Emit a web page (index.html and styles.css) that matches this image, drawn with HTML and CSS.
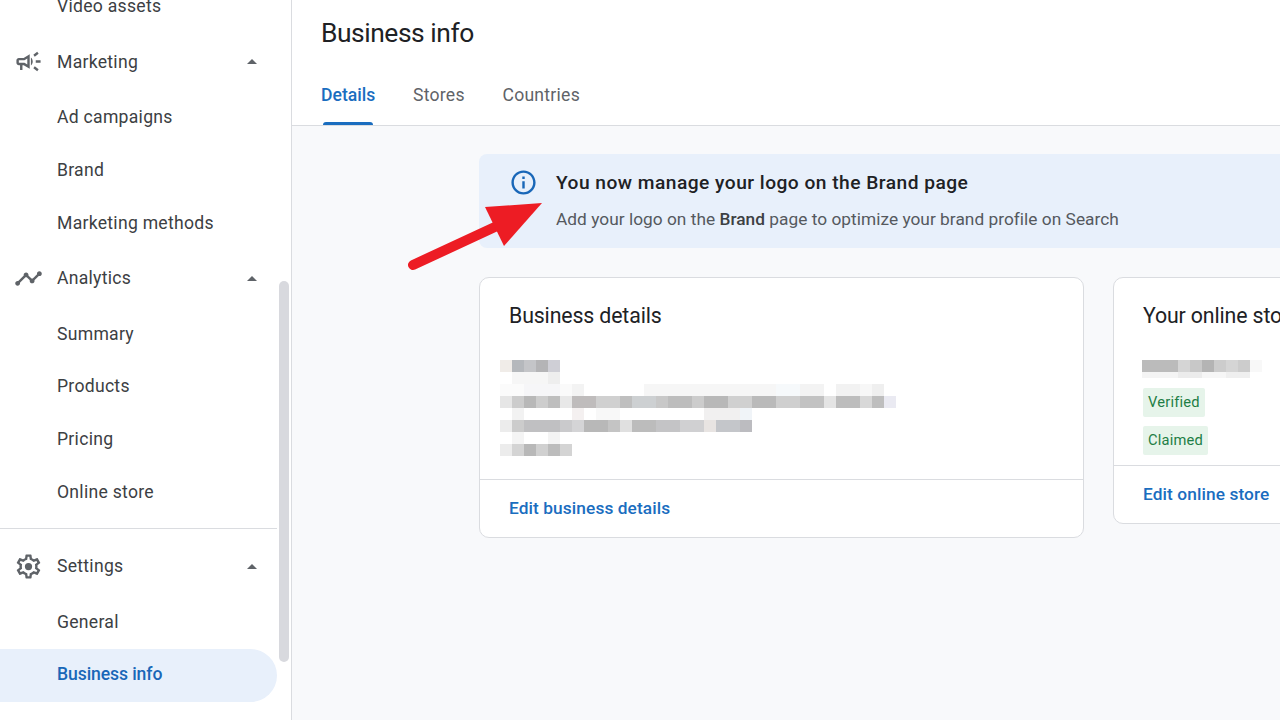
FILE: index.html
```html
<!DOCTYPE html>
<html lang="en">
<head>
  <meta charset="UTF-8" />
  <title>Business info</title>
  <link rel="stylesheet" href="styles.css">
</head>
<body>
  <nav class="sidebar">
    <div class="nav-list">
      <a class="nav-child">Video assets</a>

      <div class="nav-head">
        <svg class="nav-icon" viewBox="0 0 24 24"><path d="M18 11v2h4v-2h-4zm-2 6.61c.96.71 2.21 1.65 3.2 2.39.4-.53.8-1.07 1.2-1.6-.99-.74-2.24-1.68-3.2-2.4-.4.54-.8 1.08-1.2 1.61zM20.4 5.6c-.4-.53-.8-1.07-1.2-1.6-.99.74-2.24 1.68-3.2 2.4.4.53.8 1.07 1.2 1.6.96-.72 2.21-1.65 3.2-2.4zM4 9c-1.1 0-2 .9-2 2v2c0 1.1.9 2 2 2h1v4h2v-4h1l5 3V6L8 9H4zm5.03 1.71L11 9.53v4.94l-1.97-1.18-.48-.29H4v-2h4.55l.48-.29zM15.5 12c0-1.33-.58-2.53-1.5-3.35v6.69c.92-.81 1.5-2.01 1.5-3.34z"/></svg>
        <span>Marketing</span>
        <i class="caret"></i>
      </div>
      <a class="nav-child">Ad campaigns</a>
      <a class="nav-child">Brand</a>
      <a class="nav-child">Marketing methods</a>

      <div class="nav-head">
        <svg class="nav-icon" viewBox="0 0 24 24"><path d="M23 8c0 1.1-.9 2-2 2-.18 0-.35-.02-.51-.07l-3.56 3.55c.05.16.07.34.07.52 0 1.1-.9 2-2 2s-2-.9-2-2c0-.18.02-.36.07-.52l-2.55-2.55c-.16.05-.34.07-.52.07s-.36-.02-.52-.07l-4.55 4.56c.05.16.07.33.07.51 0 1.1-.9 2-2 2s-2-.9-2-2 .9-2 2-2c.18 0 .35.02.51.07l4.56-4.55C8.02 9.36 8 9.18 8 9c0-1.1.9-2 2-2s2 .9 2 2c0 .18-.02.36-.07.52l2.55 2.55c.16-.05.34-.07.52-.07s.36.02.52.07l3.55-3.56C19.02 8.35 19 8.18 19 8c0-1.1.9-2 2-2s2 .9 2 2z"/></svg>
        <span>Analytics</span>
        <i class="caret"></i>
      </div>
      <a class="nav-child">Summary</a>
      <a class="nav-child">Products</a>
      <a class="nav-child">Pricing</a>
      <a class="nav-child">Online store</a>

      <hr class="nav-divider">

      <div class="nav-head">
        <svg class="nav-icon" viewBox="0 0 24 24"><path d="M19.43 12.98c.04-.32.07-.64.07-.98 0-.34-.03-.66-.07-.98l2.11-1.65c.19-.15.24-.42.12-.64l-2-3.46c-.09-.16-.26-.25-.44-.25-.06 0-.12.01-.17.03l-2.49 1c-.52-.4-1.08-.73-1.69-.98l-.38-2.65C14.46 2.18 14.25 2 14 2h-4c-.25 0-.46.18-.49.42l-.38 2.65c-.61.25-1.17.59-1.69.98l-2.49-1c-.06-.02-.12-.03-.18-.03-.17 0-.34.09-.43.25l-2 3.46c-.13.22-.07.49.12.64l2.11 1.65c-.04.32-.07.65-.07.98 0 .33.03.66.07.98l-2.11 1.65c-.19.15-.24.42-.12.64l2 3.46c.09.16.26.25.44.25.06 0 .12-.01.17-.03l2.49-1c.52.4 1.08.73 1.69.98l.38 2.65c.03.24.24.42.49.42h4c.25 0 .46-.18.49-.42l.38-2.65c.61-.25 1.17-.59 1.69-.98l2.49 1c.06.02.12.03.18.03.17 0 .34-.09.43-.25l2-3.46c.12-.22.07-.49-.12-.64l-2.11-1.65zm-1.98-1.71c.04.31.05.52.05.73 0 .21-.02.43-.05.73l-.14 1.13.89.7 1.08.84-.7 1.21-1.27-.51-1.04-.42-.9.68c-.43.32-.84.56-1.25.73l-1.06.43-.16 1.13-.2 1.35h-1.4l-.19-1.35-.16-1.13-1.06-.43c-.43-.18-.83-.41-1.23-.71l-.91-.7-1.06.43-1.27.51-.7-1.21 1.08-.84.89-.7-.14-1.13c-.03-.31-.05-.54-.05-.74s.02-.43.05-.73l.14-1.13-.89-.7-1.08-.84.7-1.21 1.27.51 1.04.42.9-.68c.43-.32.84-.56 1.25-.73l1.06-.43.16-1.13.2-1.35h1.39l.19 1.35.16 1.13 1.06.43c.43.18.83.41 1.23.71l.91.7 1.06-.43 1.27-.51.7 1.21-1.07.85-.89.7.14 1.13zM12 9a3 3 0 1 0 0 6 3 3 0 0 0 0-6z"/></svg>
        <span>Settings</span>
        <i class="caret"></i>
      </div>
      <a class="nav-child">General</a>
      <a class="nav-child active">Business info</a>
    </div>
    <div class="scroll-thumb"></div>
  </nav>

  <main class="main">
    <header class="page-header">
      <h1>Business info</h1>
      <div class="tabs">
        <a class="tab active">Details</a>
        <a class="tab">Stores</a>
        <a class="tab">Countries</a>
      </div>
    </header>

    <section class="content">
      <div class="banner">
        <svg class="banner-icon" viewBox="0 0 24 24"><path d="M11 7h2v2h-2zm0 4h2v6h-2zm1-9C6.48 2 2 6.48 2 12s4.48 10 10 10 10-4.48 10-10S17.52 2 12 2zm0 18c-4.41 0-8-3.59-8-8s3.59-8 8-8 8 3.59 8 8-3.59 8-8 8z"/></svg>
        <div>
          <div class="banner-title">You now manage your logo on the Brand page</div>
          <div class="banner-text">Add your logo on the <b>Brand</b> page to optimize your brand profile on Search</div>
        </div>
      </div>

      <div class="cards">
        <div class="card card-details">
          <div class="card-body">
            <h2>Business details</h2>
            <!-- pixelated address -->
            <svg class="mosaic" width="396" height="96" viewBox="500 360 396 96" shape-rendering="crispEdges">
              <rect x="500" y="360" width="12" height="12" fill="#f0ece8"/>
              <rect x="512" y="360" width="12" height="12" fill="#b5b8bc"/>
              <rect x="524" y="360" width="12" height="12" fill="#c4c5c8"/>
              <rect x="536" y="360" width="12" height="12" fill="#b4b4b6"/>
              <rect x="548" y="360" width="12" height="12" fill="#cfcfd6"/>

              <rect x="512" y="372" width="36" height="12" fill="#f6f6f6"/>
              <rect x="548" y="372" width="12" height="12" fill="#eeeeee"/>

              <rect x="500" y="384" width="24" height="12" fill="#fbfbfb"/>
              <rect x="524" y="384" width="36" height="12" fill="#f6f6f8"/>
              <rect x="560" y="384" width="12" height="12" fill="#fafafa"/>
              <rect x="572" y="384" width="12" height="12" fill="#f3f3f3"/>
              <rect x="644" y="384" width="132" height="12" fill="#f6f6f6"/>
              <rect x="776" y="384" width="24" height="12" fill="#f6f9fb"/>
              <rect x="800" y="384" width="24" height="12" fill="#f3f3f3"/>
              <rect x="836" y="384" width="24" height="12" fill="#f2f2f2"/>
              <rect x="860" y="384" width="12" height="12" fill="#f7f7f7"/>
              <rect x="872" y="384" width="12" height="12" fill="#efefef"/>

              <rect x="500" y="396" width="12" height="12" fill="#e6e6e6"/>
              <rect x="512" y="396" width="12" height="12" fill="#cccccc"/>
              <rect x="524" y="396" width="12" height="12" fill="#b8b8b8"/>
              <rect x="536" y="396" width="12" height="12" fill="#cdcdcd"/>
              <rect x="548" y="396" width="12" height="12" fill="#bebebe"/>
              <rect x="560" y="396" width="12" height="12" fill="#e8e8e8"/>
              <rect x="572" y="396" width="24" height="12" fill="#bfbcbc"/>
              <rect x="596" y="396" width="24" height="12" fill="#d0d0d0"/>
              <rect x="620" y="396" width="12" height="12" fill="#bfbfbf"/>
              <rect x="632" y="396" width="24" height="12" fill="#cdd0d2"/>
              <rect x="656" y="396" width="12" height="12" fill="#c8c8c8"/>
              <rect x="668" y="396" width="24" height="12" fill="#bdbdbd"/>
              <rect x="692" y="396" width="12" height="12" fill="#cccccc"/>
              <rect x="704" y="396" width="24" height="12" fill="#b8b8b8"/>
              <rect x="728" y="396" width="24" height="12" fill="#d0d0d0"/>
              <rect x="752" y="396" width="24" height="12" fill="#bababa"/>
              <rect x="776" y="396" width="24" height="12" fill="#cfcfcf"/>
              <rect x="800" y="396" width="24" height="12" fill="#c2c2c2"/>
              <rect x="824" y="396" width="12" height="12" fill="#e4e4e4"/>
              <rect x="836" y="396" width="24" height="12" fill="#bdbdbd"/>
              <rect x="860" y="396" width="12" height="12" fill="#d8d8d8"/>
              <rect x="872" y="396" width="12" height="12" fill="#bebebe"/>
              <rect x="884" y="396" width="12" height="12" fill="#eaeaf2"/>

              <rect x="512" y="408" width="12" height="12" fill="#f2f2f2"/>
              <rect x="572" y="408" width="12" height="12" fill="#f4f0f0"/>
              <rect x="596" y="408" width="24" height="12" fill="#f8f8f8"/>
              <rect x="704" y="408" width="36" height="12" fill="#f1f0f0"/>
              <rect x="740" y="408" width="12" height="12" fill="#f0f4f8"/>

              <rect x="500" y="420" width="12" height="12" fill="#ececec"/>
              <rect x="512" y="420" width="12" height="12" fill="#cccccc"/>
              <rect x="524" y="420" width="36" height="12" fill="#c0c0c2"/>
              <rect x="560" y="420" width="12" height="12" fill="#cacacc"/>
              <rect x="572" y="420" width="12" height="12" fill="#d4d4d6"/>
              <rect x="584" y="420" width="24" height="12" fill="#b8b8b8"/>
              <rect x="608" y="420" width="12" height="12" fill="#c4c4c4"/>
              <rect x="620" y="420" width="12" height="12" fill="#e0e0e0"/>
              <rect x="632" y="420" width="24" height="12" fill="#bcbcbc"/>
              <rect x="656" y="420" width="24" height="12" fill="#c4c4c6"/>
              <rect x="680" y="420" width="24" height="12" fill="#d0d0d2"/>
              <rect x="704" y="420" width="12" height="12" fill="#e8e4e2"/>
              <rect x="716" y="420" width="24" height="12" fill="#c4c6ca"/>
              <rect x="740" y="420" width="12" height="12" fill="#bcbcc0"/>

              <rect x="512" y="432" width="12" height="12" fill="#f4f4f4"/>
              <rect x="548" y="432" width="12" height="12" fill="#f4f4f4"/>

              <rect x="500" y="444" width="12" height="12" fill="#ececec"/>
              <rect x="512" y="444" width="12" height="12" fill="#d4d4d4"/>
              <rect x="524" y="444" width="12" height="12" fill="#b8b8b8"/>
              <rect x="536" y="444" width="12" height="12" fill="#d0d0d0"/>
              <rect x="548" y="444" width="12" height="12" fill="#bcbcbc"/>
              <rect x="560" y="444" width="12" height="12" fill="#d4d4d4"/>
            </svg>
          </div>
          <div class="card-footer"><a>Edit business details</a></div>
        </div>

        <div class="card card-store">
          <div class="card-body">
            <h2>Your online store</h2>
            <svg class="mosaic mosaic-store" width="120" height="18" viewBox="1142 360 120 18" shape-rendering="crispEdges">
              <rect x="1142" y="360" width="36" height="12" fill="#bbbbbb"/>
              <rect x="1178" y="360" width="12" height="12" fill="#d5d5d5"/>
              <rect x="1190" y="360" width="12" height="12" fill="#c8c8c8"/>
              <rect x="1202" y="360" width="12" height="12" fill="#b4b4b4"/>
              <rect x="1214" y="360" width="12" height="12" fill="#cccccc"/>
              <rect x="1226" y="360" width="12" height="12" fill="#d5d5d5"/>
              <rect x="1238" y="360" width="12" height="12" fill="#cccccc"/>
              <rect x="1250" y="360" width="12" height="12" fill="#f8f8f8"/>
              <rect x="1142" y="372" width="36" height="6" fill="#f4f4f4"/>
              <rect x="1178" y="372" width="24" height="6" fill="#ececec"/>
              <rect x="1202" y="372" width="24" height="6" fill="#f6f6f6"/>
              <rect x="1226" y="372" width="24" height="6" fill="#efefef"/>
            </svg>
            <div class="badge">Verified</div>
            <div class="badge">Claimed</div>
          </div>
          <div class="card-footer"><a>Edit online store</a></div>
        </div>
      </div>
    </section>
  </main>

  <!-- annotation drawn on top of the screenshot -->
  <svg class="arrow" width="150" height="80" viewBox="400 195 150 80">
    <path d="M413 265 L497 226" stroke="#ed1c24" stroke-width="10" stroke-linecap="round" fill="none"/>
    <path d="M485 207 L542 203 L504 246 Z" fill="#ed1c24"/>
  </svg>
</body>
</html>
```

FILE: styles.css
```css
* {
  box-sizing: border-box;
}
html, body {
  height: 100%;
}
body {
  margin: 0;
  display: flex;
  height: 720px;
  overflow: hidden;
  font-family: Roboto, 'Liberation Sans', sans-serif;
  color: #3c4043;
  background: #f8f9fb;
}

/* sidebar */
.sidebar {
  position: relative;
  flex: none;
  width: 292px;
  height: 720px;
  overflow: hidden;
  background: #fff;
  border-right: 1px solid #dadce0;
}
.nav-list {
  width: 277px;
  margin-top: -20px;
}
.nav-head {
  display: flex;
  align-items: center;
  height: 58px;
  padding: 0 20px 0 14px;
  font-size: 17.6px;
  letter-spacing: 0.27px;
}
.nav-icon {
  flex: none;
  width: 29px;
  height: 29px;
  margin-right: 14px;
  fill: #5f6368;
}
.caret {
  margin-left: auto;
  border-left: 5.5px solid transparent;
  border-right: 5.5px solid transparent;
  border-bottom: 5.5px solid #5f6368;
}
.nav-child {
  display: flex;
  align-items: center;
  height: 52.8px;
  padding-left: 57px;
  font-size: 17.6px;
  letter-spacing: 0.27px;
}
.nav-child.active {
  height: 53px;
  margin-top: 0.8px;
  padding-bottom: 2px;
  color: #1967b8;
  font-weight: 500;
  letter-spacing: -0.1px;
  background: #e8f0fb;
  border-radius: 0 27px 27px 0;
}
.nav-divider {
  margin: 9.6px 0 8.3px;
  border: 0;
  border-top: 1px solid #dadce0;
}
.scroll-thumb {
  position: absolute;
  left: 279px;
  top: 281px;
  width: 10px;
  height: 381px;
  border-radius: 5px;
  background: #d8d9de;
}

/* main area */
.main {
  flex: 1;
  min-width: 0;
  overflow: hidden;
}
.page-header {
  padding: 12px 0 0 29px;
  background: #fff;
  border-bottom: 1px solid #dadce0;
  height: 126px;
}
.page-header h1 {
  margin: 0;
  font-size: 26.4px;
  font-weight: 400;
  line-height: 42px;
  letter-spacing: -0.45px;
  color: #202124;
}
.tabs {
  display: flex;
  gap: 37.7px;
}
.tab {
  position: relative;
  padding: 29px 0 18px;
  font-size: 17.6px;
  line-height: 24px;
  letter-spacing: 0.25px;
  color: #5f6368;
}
.tab.active {
  color: #1a6dbf;
  font-weight: 500;
  letter-spacing: 0;
}
.tab.active::after {
  content: "";
  position: absolute;
  left: 2px;
  right: 2px;
  bottom: 0;
  height: 3px;
  border-radius: 3px 3px 0 0;
  background: #1a6dbf;
}

.content {
  padding: 28px 0 0 187px;
}
.banner {
  display: flex;
  height: 94px;
  padding: 16px 0 0 30px;
  background: #e8f0fb;
  border-radius: 8px 0 0 8px;
}
.banner-icon {
  flex: none;
  width: 29px;
  height: 29px;
  margin: -2px 18px 0 0;
  fill: #1967b8;
}
.banner-title {
  font-size: 19.2px;
  font-weight: 500;
  line-height: 26px;
  letter-spacing: 0.47px;
  color: #202124;
}
.banner-text {
  margin-top: 10px;
  font-size: 17.3px;
  line-height: 26px;
  letter-spacing: 0.03px;
  color: #55595e;
}
.banner-text b {
  font-weight: 500;
  color: #3c4043;
}

.cards {
  display: flex;
  align-items: flex-start;
  gap: 29px;
  margin-top: 29px;
}
.card {
  flex: none;
  background: #fff;
  border: 1px solid #dadce0;
  border-radius: 10px;
}
.card-details {
  width: 605px;
}
.card-store {
  width: 400px;
}
.card-body {
  padding: 24px 29px 23px;
}
.card-store .card-body {
  padding-bottom: 10px;
}
.card h2 {
  margin: 0 0 30px;
  font-size: 21.3px;
  font-weight: 400;
  line-height: 28px;
  letter-spacing: -0.13px;
  color: #202124;
}
.mosaic {
  display: block;
  margin-left: -9px;
}
.mosaic-store {
  margin: 0 0 10px -1px;
}
.badge {
  display: table;
  height: 29px;
  margin-bottom: 9px;
  padding: 0 5px;
  font-size: 14.7px;
  line-height: 28px;
  letter-spacing: 0.2px;
  color: #1e7e45;
  background: #e6f4ea;
  border-radius: 2px;
}
.badge:last-child {
  margin-bottom: 0;
}
.card-footer {
  height: 58px;
  padding: 0 29px;
  font-size: 17.3px;
  font-weight: 500;
  line-height: 57px;
  letter-spacing: 0.1px;
  color: #1a6dbf;
  border-top: 1px solid #dadce0;
}

.arrow {
  position: absolute;
  left: 400px;
  top: 195px;
}
```
